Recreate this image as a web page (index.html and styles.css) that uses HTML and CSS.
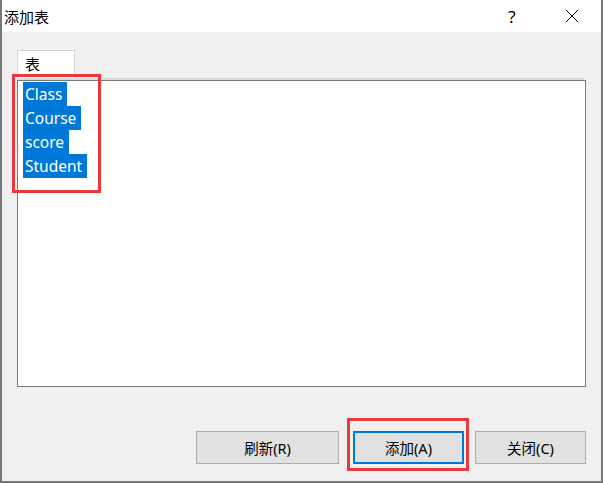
FILE: index.html
```html
<!DOCTYPE html>
<html lang="zh">
<head>
<meta charset="utf-8">
<title>添加表</title>
<link rel="stylesheet" href="styles.css">
</head>
<body>
<div class="window">
  <div class="titlebar">
    <span class="title">添加表</span>
    <span class="help">?</span>
    <span class="close">
      <svg width="14" height="14" viewBox="0 0 14 14"><path d="M1 1 L13 13 M13 1 L1 13" stroke="#000" stroke-width="1" fill="none"/></svg>
    </span>
  </div>
  <div class="body">
    <div class="tabs">
      <div class="tab">表</div>
    </div>
    <div class="panel">
      <div class="listbox">
        <div class="item"><span>Class</span></div>
        <div class="item"><span>Course</span></div>
        <div class="item"><span>score</span></div>
        <div class="item"><span>Student</span></div>
      </div>
    </div>
    <div class="buttons">
      <button class="btn btn-wide">刷新(R)</button>
      <button class="btn btn-default">添加(A)</button>
      <button class="btn btn-close">关闭(C)</button>
    </div>
  </div>
  <div class="mark mark-list"></div>
  <div class="mark mark-btn"></div>
</div>
</body>
</html>
```

FILE: styles.css
```css
* { box-sizing: border-box; }
html, body { margin: 0; padding: 0; }
body {
  font-family: "Noto Sans", "Noto Sans CJK SC", sans-serif;
  color: #000;
}
.window {
  position: relative;
  width: 603px;
  height: 483px;
  display: flex;
  flex-direction: column;
  border: 2px solid #777;
  border-top: 0;
  background: #f0f0f0;
}
.titlebar {
  height: 32px;
  background: #fff;
  display: flex;
  align-items: center;
  font-family: "Noto Sans CJK SC", sans-serif;
}
.title {
  font-size: 15px;
  margin-left: 2px;
  flex: 1;
  line-height: 1;
}
.help {
  font-family: "Noto Sans", sans-serif;
  font-size: 17px;
  width: 20px;
  text-align: center;
  margin-right: 43px;
}
.close {
  width: 14px;
  height: 14px;
  margin-right: 22px;
  display: flex;
}
.body {
  flex: 1;
  display: flex;
  flex-direction: column;
  padding: 18px 15px 16px 15px;
}
.tabs {
  display: flex;
  height: 28px;
}
.tab {
  width: 58px;
  background: #fff;
  border: 1px solid #d9d9d9;
  border-bottom: 0;
  font-family: "Noto Sans CJK SC", sans-serif;
  font-size: 15px;
  line-height: 26px;
  padding-left: 7px;
}
.panel {
  border-top: 2px solid #dadada;
  margin-right: 2px;
}
.listbox {
  margin-right: -2px;
  height: 307px;
  background: #fff;
  border: 1px solid #7a7a7a;
  padding: 1px 0 0 5px;
}
.item {
  height: 24px;
  line-height: 24px;
  font-size: 15.5px;
}
.item span {
  display: inline-block;
  height: 24px;
  background: #0078d7;
  color: #fff;
  padding: 0 5px 0 2px;
}
.buttons {
  margin-top: 44px;
  display: flex;
  justify-content: flex-end;
}
.btn {
  height: 33px;
  width: 111px;
  background: #e1e1e1;
  border: 1px solid #adadad;
  font-family: "Noto Sans", "Noto Sans CJK SC", sans-serif;
  font-size: 14.5px;
  color: #000;
  padding: 0;
}
.btn-wide { width: 143px; }
.btn-default {
  margin-left: 14px;
  border: 2px solid #0078d7;
}
.btn-close { margin-left: 11px; }
.mark {
  position: absolute;
  border: 3px solid #e8393d;
}
.mark-list {
  left: 10px;
  top: 74px;
  width: 89px;
  height: 119px;
}
.mark-btn {
  left: 345px;
  top: 418px;
  width: 122px;
  height: 53px;
}
```
